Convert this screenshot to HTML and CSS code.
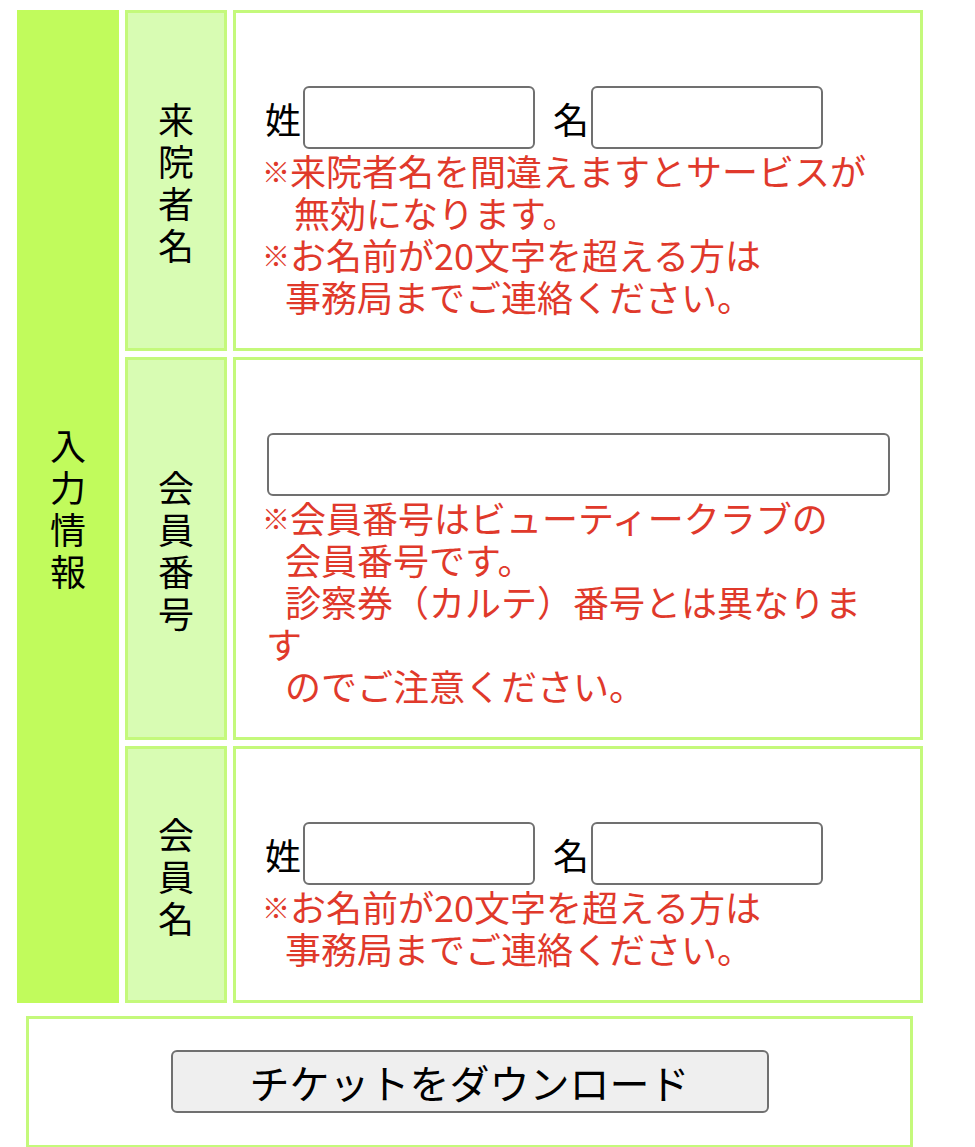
FILE: index.html
```html
<!DOCTYPE html>
<html lang="ja">
<head>
<meta charset="utf-8">
<title>チケットをダウンロード</title>
<link rel="stylesheet" href="styles.css">
</head>
<body>
<div class="grid">
  <div class="sect"><span class="vt">入力情報</span></div>

  <div class="lbl"><span class="vt">来院者名</span></div>
  <div class="val">
    <div class="name-row"><span class="k">姓</span><input class="in-short" type="text"><span class="k k2">名</span><input class="in-short" type="text"></div>
    <p class="note"><span class="kome">※</span>来院者名を間違えますとサービスが<br><span class="ind2"></span>無効になります。<br><span class="kome">※</span>お名前が20文字を超える方は<br><span class="ind"></span>事務局までご連絡ください。</p>
  </div>

  <div class="lbl"><span class="vt">会員番号</span></div>
  <div class="val">
    <div class="name-row"><input class="in-long" type="text"></div>
    <p class="note"><span class="kome">※</span>会員番号はビューティークラブの<br><span class="ind"></span>会員番号です。<br><span class="ind"></span>診察券（カルテ）番号とは異なりま<br>す<br><span class="ind"></span>のでご注意ください。</p>
  </div>

  <div class="lbl"><span class="vt">会員名</span></div>
  <div class="val">
    <div class="name-row"><span class="k">姓</span><input class="in-short" type="text"><span class="k k2">名</span><input class="in-short" type="text"></div>
    <p class="note"><span class="kome">※</span>お名前が20文字を超える方は<br><span class="ind"></span>事務局までご連絡ください。</p>
  </div>
</div>

<div class="dl">
  <button class="dl-btn" type="button">チケットをダウンロード</button>
</div>
</body>
</html>
```

FILE: styles.css
```css
* { box-sizing: border-box; }

html, body {
  margin: 0;
  padding: 0;
  background: #ffffff;
}

body {
  font-family: "Noto Sans CJK JP", "Noto Sans", sans-serif;
  color: #000000;
  font-size: 36px;
  line-height: 42px;
  overflow: hidden;
}

.grid {
  display: grid;
  grid-template-columns: 102px 102px 690px;
  column-gap: 6px;
  row-gap: 6px;
  margin: 10px 0 0 17px;
  width: 906px;
}

.sect {
  grid-row: 1 / span 3;
  grid-column: 1;
  background: #c1fb5c;
  display: flex;
  align-items: center;
  justify-content: center;
}

.lbl {
  grid-column: 2;
  background: #d8fcb3;
  border: 3px solid #c4f97b;
  display: flex;
  align-items: center;
  justify-content: center;
}

.vt {
  display: block;
  width: 1em;
  font-size: 36px;
  line-height: 42px;
  word-break: break-all;
  text-align: center;
}

.val {
  grid-column: 3;
  background: #ffffff;
  border: 3px solid #c4f97b;
  padding: 73px 28px 31px 30px;
}

.name-row {
  display: flex;
  align-items: center;
  height: 63px;
}

.k {
  font-size: 36px;
  line-height: 42px;
  margin-left: -1px;
}

.k2 {
  margin-left: 18px;
}

input {
  font: inherit;
  height: 63px;
  border: 2px solid #707070;
  border-radius: 6px;
  background: #ffffff;
  padding: 0 6px;
  margin: 0;
}

.in-short {
  width: 232px;
  margin-left: 2px;
}

.in-long {
  width: 623px;
  margin-left: 1px;
}

.note {
  margin: 0;
  color: #e0392b;
  font-size: 36px;
  line-height: 42px;
  white-space: nowrap;
}

.kome {
  display: inline-block;
  vertical-align: top;
  height: 42px;
  width: 28px;
  line-height: 44px;
  font-size: 28px;
  margin-left: -4px;
}

.ind {
  display: inline-block;
  width: 19px;
}

.ind2 {
  display: inline-block;
  width: 28px;
}

.dl {
  margin: 13px 0 0 26px;
  width: 887px;
  border: 3px solid #c4f97b;
  background: #ffffff;
  padding: 31px 0 32px;
  display: flex;
  justify-content: center;
}

.dl-btn {
  width: 598px;
  height: 63px;
  border: 2px solid #707070;
  border-radius: 6px;
  background: #efefef;
  color: #000000;
  font-family: "Noto Sans CJK JP", "Noto Sans", sans-serif;
  font-size: 40px;
  line-height: 1;
  padding: 0;
}
```
